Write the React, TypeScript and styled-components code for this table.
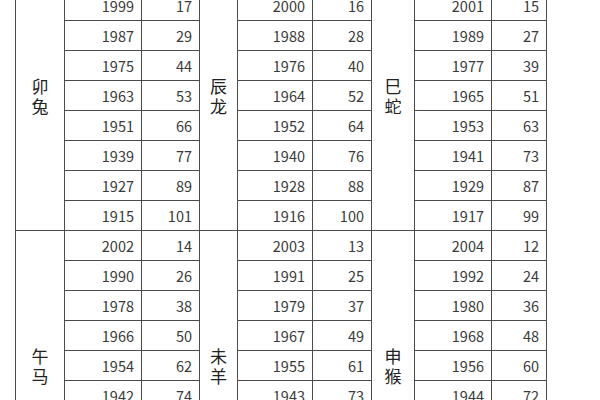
import React from "react";
import styled, { createGlobalStyle } from "styled-components";

const Global = createGlobalStyle`
  html, body { margin: 0; padding: 0; background: #fff; overflow: hidden; }
  body { font-family: "Noto Sans CJK SC", "Noto Sans", sans-serif; color: #333; }
`;

const Page = styled.div`
  width: 600px;
  height: 400px;
  overflow: hidden;
  padding-left: 15px;
  box-sizing: border-box;
`;

const Table = styled.table`
  border-collapse: collapse;
  table-layout: fixed;
  margin-top: -40px;
`;

const Cell = styled.td<{ $w?: number }>`
  border: 1px solid #4a4a4a;
  height: 29px;
  padding: 0 7px 0 0;
  text-align: right;
  font-size: 14.5px;
  line-height: 29px;
  color: #3a3a3a;
  box-sizing: border-box;
  white-space: nowrap;
`;

const Sign = styled.td`
  border: 1px solid #4a4a4a;
  text-align: center;
  vertical-align: middle;
  padding: 0;
  font-size: 17px;
  line-height: 20px;
  color: #222;
`;

type Group = { sign: [string, string]; rows: [number, number][] };

const blocks: Group[][] = [
  [
    { sign: ["卯", "兔"], rows: [[2011, 5], [1999, 17], [1987, 29], [1975, 44], [1963, 53], [1951, 66], [1939, 77], [1927, 89], [1915, 101]] },
    { sign: ["辰", "龙"], rows: [[2012, 4], [2000, 16], [1988, 28], [1976, 40], [1964, 52], [1952, 64], [1940, 76], [1928, 88], [1916, 100]] },
    { sign: ["巳", "蛇"], rows: [[2013, 3], [2001, 15], [1989, 27], [1977, 39], [1965, 51], [1953, 63], [1941, 73], [1929, 87], [1917, 99]] },
  ],
  [
    { sign: ["午", "马"], rows: [[2002, 14], [1990, 26], [1978, 38], [1966, 50], [1954, 62], [1942, 74], [1930, 86], [1918, 98], [2014, 2]] },
    { sign: ["未", "羊"], rows: [[2003, 13], [1991, 25], [1979, 37], [1967, 49], [1955, 61], [1943, 73], [1931, 85], [1919, 97], [2015, 1]] },
    { sign: ["申", "猴"], rows: [[2004, 12], [1992, 24], [1980, 36], [1968, 48], [1956, 60], [1944, 72], [1932, 84], [1920, 96], [2016, 0]] },
  ],
];

const widths = [49, 77, 58, 38, 75, 59, 43, 77, 55];

export default function App() {
  return (
    <Page>
      <Global />
      <Table>
        <colgroup>
          {widths.map((w, i) => (
            <col key={i} style={{ width: w }} />
          ))}
        </colgroup>
        <tbody>
          {blocks.map((block, bi) =>
            block[0].rows.map((_, ri) => (
              <tr key={`${bi}-${ri}`}>
                {block.map((g, gi) => (
                  <React.Fragment key={gi}>
                    {ri === 0 && (
                      <Sign rowSpan={g.rows.length}>
                        {g.sign[0]}
                        <br />
                        {g.sign[1]}
                      </Sign>
                    )}
                    <Cell>{g.rows[ri][0]}</Cell>
                    <Cell>{g.rows[ri][1]}</Cell>
                  </React.Fragment>
                ))}
              </tr>
            ))
          )}
        </tbody>
      </Table>
    </Page>
  );
}
